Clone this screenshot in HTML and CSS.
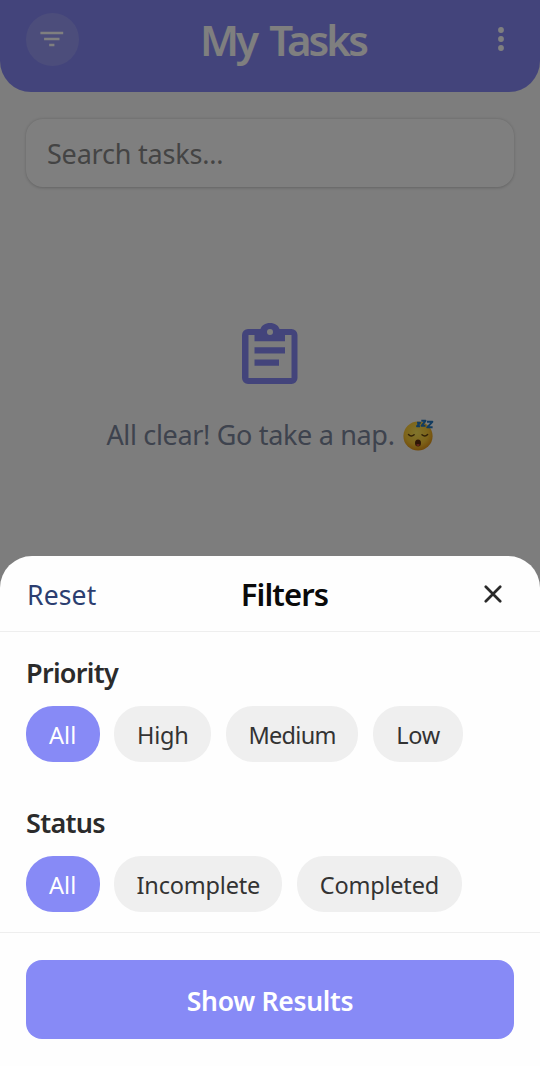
FILE: index.html
```html
<!DOCTYPE html>
<html lang="en">
<head>
<meta charset="utf-8">
<meta name="viewport" content="width=device-width, initial-scale=1">
<title>My Tasks</title>
<link rel="stylesheet" href="styles.css">
</head>
<body>
<div class="app">
  <header class="topbar">
    <button class="round-btn" aria-label="Filter">
      <svg width="24" height="16" viewBox="0 0 24 16" fill="#fff"><path d="M.4 .700h22.800v2.600H.4zM4.100 6.700h15.400v2.500H4.100zM9.200 12.700h5.200v2.600H9.200z"/></svg>
    </button>
    <h1 class="title"><span>My Tasks</span></h1>
    <button class="more-btn" aria-label="More">
      <svg width="8" height="26" viewBox="0 0 8 26" fill="#fff"><circle cx="4" cy="4" r="2.900"/><circle cx="4" cy="13" r="2.900"/><circle cx="4" cy="22" r="2.900"/></svg>
    </button>
  </header>
  <main class="main">
    <div class="search"><span>Search tasks...</span></div>
    <div class="empty">
      <svg class="clipboard" width="56" height="62" viewBox="0 0 56 62"><path fill="#8789f6" fill-rule="evenodd" d="M6 6H18.500C19.500 2.400 23.200 0 28 0s8.500 2.400 9.500 6H49.500a6 6 0 0 1 6 6V55a6 6 0 0 1-6 6H6a6 6 0 0 1-6-6V12a6 6 0 0 1 6-6zM28 6a3 3 0 1 0 0 6 3 3 0 0 0 0-6zM6.500 12V55h43V12H43V18.200H12.500V12zM12.500 24.300h30.500v6.200h-30.500zM12.500 36.500h24.500v6.200h-24.500z"/></svg>
      <p class="empty-text"><span>All clear! Go take a nap.</span>
        <svg class="emoji" width="34" height="34" viewBox="0 0 34 34" role="img" aria-label="Sleeping face">
          <defs><radialGradient id="face" cx="45%" cy="38%" r="62%"><stop offset="0" stop-color="#ffe95a"/><stop offset=".65" stop-color="#fcc934"/><stop offset="1" stop-color="#e39415"/></radialGradient></defs>
          <circle cx="16" cy="18" r="14.600" fill="url(#face)"/>
          <g fill="none" stroke="#63420f" stroke-width="1.500" stroke-linecap="round"><path d="M6.500 16.500q2.700 3 5.600.300M20 16.800q2.900 2.700 5.600-.300"/></g>
          <ellipse cx="16" cy="25" rx="3" ry="3.600" fill="#5d2d0c"/><path d="M14 27q2-1.800 4 0-2 2-4 0z" fill="#cf4b38"/>
          <g fill="none" stroke="#2478c0" stroke-width="1.900" stroke-linejoin="round"><path d="M15 4.800h3l-3 3.400h3"/><path d="M19.300 2.800h4.200l-4 5h4"/><path d="M25 3.800h5.400l-5.200 5.500h5.400"/></g>
        </svg>
      </p>
    </div>
  </main>
  <div class="overlay">
    <section class="sheet">
      <div class="sheet-head">
        <span class="reset">Reset</span>
        <h2 class="sheet-title">Filters</h2>
        <button class="close" aria-label="Close"><svg width="18" height="18" viewBox="0 0 18 18" fill="none" stroke="#2a2a2a" stroke-width="2.700" stroke-linecap="round"><path d="M1.800 1.800l14.400 14.400M16.200 1.800L1.800 16.200"/></svg></button>
      </div>
      <div class="sheet-body">
        <h3 class="group-title priority">Priority</h3>
        <div class="chips">
          <span class="chip active">All</span><span class="chip high">High</span><span class="chip medium">Medium</span><span class="chip low">Low</span>
        </div>
        <h3 class="group-title status">Status</h3>
        <div class="chips">
          <span class="chip active">All</span><span class="chip incomplete">Incomplete</span><span class="chip completed">Completed</span>
        </div>
      </div>
      <div class="sheet-foot"><button class="show"><span>Show Results</span></button></div>
    </section>
  </div>
</div>
</body>
</html>
```

FILE: styles.css
```css
* { box-sizing: border-box; }
body { margin: 0; font-family: "Noto Sans", sans-serif; }
h1, h2, h3, p { margin: 0; }
button { border: 0; padding: 0; background: none; font: inherit; }
svg { display: block; }

.app { position: relative; width: 540px; height: 1066px; overflow: hidden; background: #fafafa; }

.topbar {
  display: grid;
  grid-template-columns: 53px 1fr 53px;
  align-items: start;
  height: 92px;
  padding: 13px 26px 0;
  background: #8789f6;
  border-radius: 0 0 31px 31px;
}
.round-btn {
  display: grid;
  place-items: center;
  width: 53px;
  height: 53px;
  padding: 0 1px 1px 0;
  border-radius: 50%;
  background: rgba(255, 255, 255, .15);
}
.title { padding-left: 26px; text-align: center; font-size: 42px; line-height: 54px; font-weight: 600; color: #fff; letter-spacing: -2.900px; word-spacing: 5px; }
.more-btn { display: flex; justify-content: flex-end; padding: 13px 9px 0 0; }

.main { padding: 26.500px 26px 0; }
.search {
  height: 68.500px;
  padding-left: 21px;
  border-radius: 17px;
  background: #fff;
  box-shadow: 0 .5px 3px rgba(0, 0, 0, .2);
  font-size: 27px;
  line-height: 70px;
  letter-spacing: -.200px;
  color: #888;
}
.empty { display: flex; flex-direction: column; align-items: center; padding-top: 136px; }
.empty-text { display: flex; align-items: center; gap: 7px; height: 40px; margin-top: 30px; padding-left: 2px; font-size: 27px; line-height: 42px; letter-spacing: -.330px; color: #7c869c; }

.overlay { position: absolute; inset: 0; display: flex; align-items: flex-end; background: rgba(0, 0, 0, .5); }
.sheet { width: 100%; height: 510px; border-radius: 32px 32px 0 0; background: #fefefe; }
.sheet-head {
  display: grid;
  grid-template-columns: 120px 1fr 80px;
  grid-template-rows: 75px;
  height: 76px;
  padding: 0 38px 0 27px;
  border-bottom: 1.500px solid #eee;
  line-height: 76px;
}
.reset { font-size: 26.500px; color: #2c3e70; line-height: 79px; letter-spacing: .150px; }
.sheet-title { text-align: center; font-size: 31px; font-weight: 600; color: #0a0a0a; letter-spacing: -.900px; }
.close { align-self: center; justify-self: end; }

.sheet-body { height: 300px; padding: 21px 26px 0; }
.group-title { height: 40px; font-size: 27px; line-height: 40px; font-weight: 600; color: #2b2b2b; letter-spacing: -.700px; }
.group-title.status { margin-top: 41px; }
.chips { display: flex; gap: 14.800px; margin-top: 13px; }
.chip { height: 56px; border-radius: 27px; background: #efefef; font-size: 23.500px; line-height: 58px; text-align: center; color: #333; letter-spacing: -.200px; }
.chip.active { width: 73.500px; background: #878af6; color: #fff; letter-spacing: .200px; }
.chip.high { width: 97px; }
.chip.medium { width: 132px; letter-spacing: -.750px; }
.chip.low { width: 90.500px; }
.chip.incomplete { width: 168px; }
.chip.completed { width: 164.500px; }

.sheet-foot { height: 134px; padding: 27px 26px 0; border-top: 1.500px solid #eee; }
.show { display: block; width: 100%; height: 79px; border-radius: 16px; background: #878af6; color: #fff; font-size: 26.500px; line-height: 82px; font-weight: 600; letter-spacing: -.300px; }
```
